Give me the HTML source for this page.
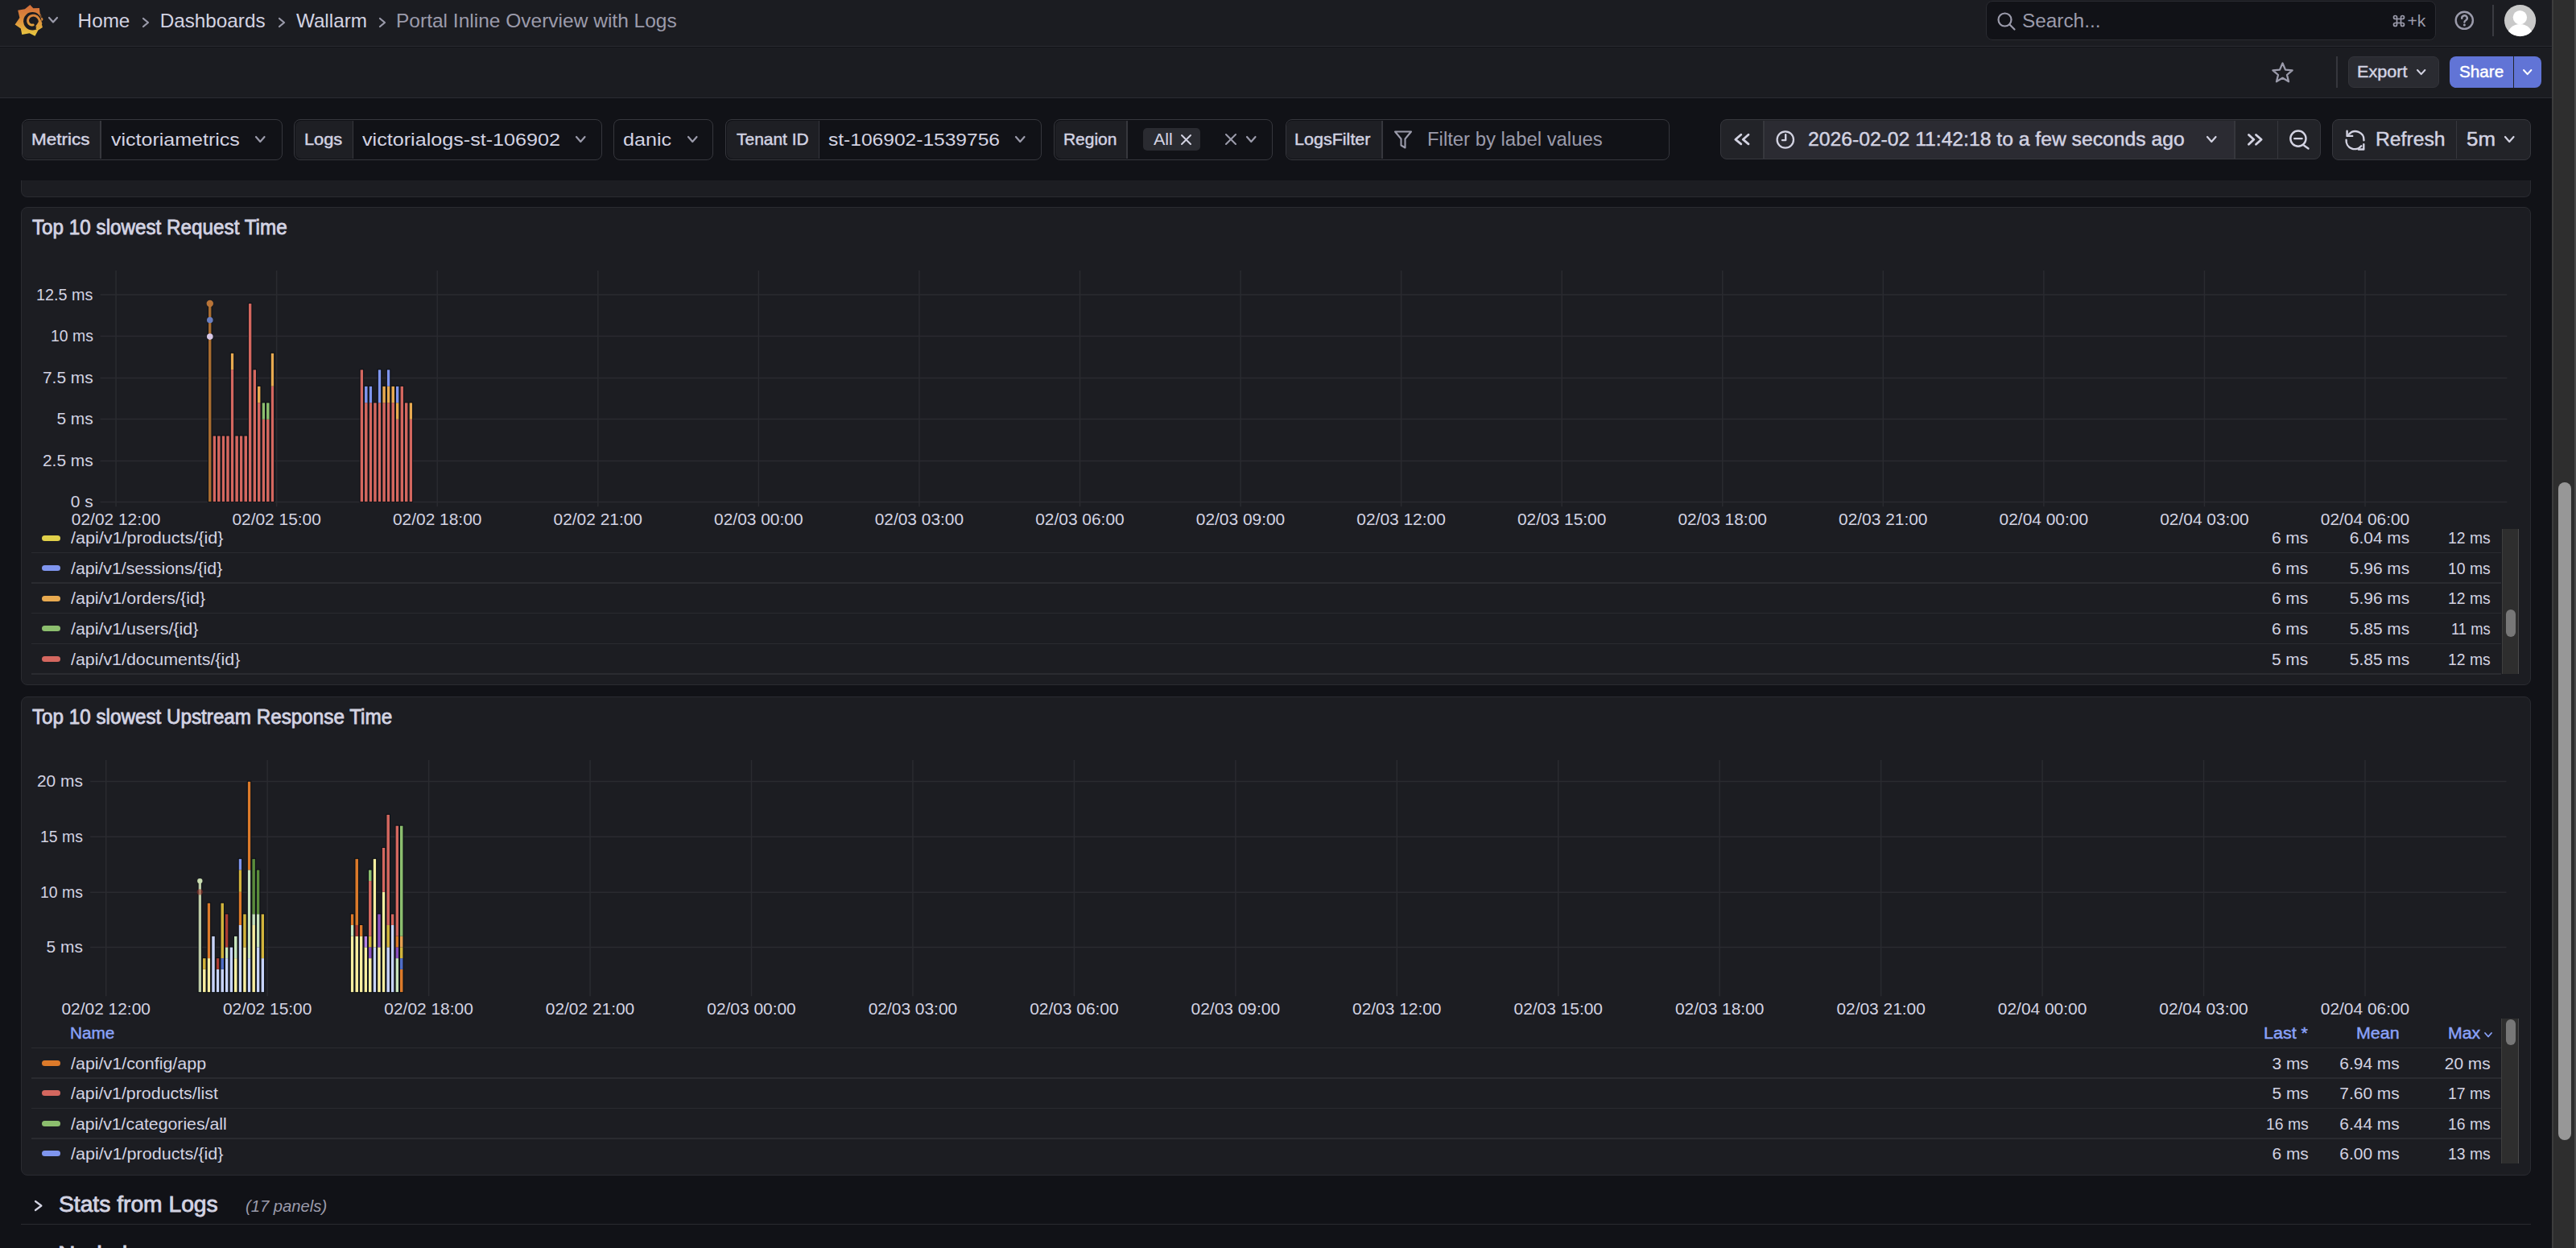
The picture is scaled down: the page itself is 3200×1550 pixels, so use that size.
<!DOCTYPE html>
<html><head><meta charset="utf-8"><title>Portal Inline Overview with Logs</title>
<style>
html,body{margin:0;padding:0;}
body{width:3200px;height:1550px;overflow:hidden;position:relative;background:#111217;font-family:"Liberation Sans",sans-serif;}
.t{position:absolute;white-space:nowrap;line-height:1;transform-origin:0 0;}
.r{position:absolute;box-sizing:border-box;}
svg.r{overflow:visible;}
</style></head><body>
<div class="r" style="left:0.00px;top:0.00px;width:3170.00px;height:57.00px;background:#1b1c21;"></div>
<div class="r" style="left:0.00px;top:57.00px;width:3170.00px;height:1.20px;background:#2b2c32;"></div>
<div class="r" style="left:0.00px;top:58.50px;width:3170.00px;height:62.50px;background:#1b1c21;"></div>
<div class="r" style="left:0.00px;top:120.80px;width:3170.00px;height:1.20px;background:#2b2c32;"></div>
<svg class="r" style="left:15.00px;top:3.00px;width:42.00px;height:45.00px;" viewBox="15 3 42 45" fill="none"><defs><linearGradient id="lg" gradientUnits="userSpaceOnUse" x1="0" y1="8" x2="0" y2="44"><stop offset="0" stop-color="#d4703a"/><stop offset="0.45" stop-color="#dc8c3c"/><stop offset="1" stop-color="#e8c840"/></linearGradient></defs><polygon fill="url(#lg)" points="37.35,6.06 41.30,10.20 48.90,10.00 49.60,16.20 53.60,23.90 51.20,27.50 52.90,34.00 47.40,37.60 43.50,44.80 36.60,41.20 27.30,43.00 25.80,35.40 18.60,30.40 24.40,22.10 22.20,12.70 30.90,11.30"/><circle cx="40.3" cy="26.3" r="11.2" fill="#1b1c21"/><polyline fill="none" stroke="url(#lg)" stroke-width="2.9" stroke-linecap="round" points="41.20,30.93 40.75,31.01 40.30,31.06 39.84,31.08 39.38,31.05 38.91,30.98 38.45,30.86 37.99,30.70 37.55,30.50 37.12,30.25 36.71,29.96 36.33,29.63 35.97,29.25 35.65,28.84 35.37,28.39 35.12,27.91 34.92,27.41 34.77,26.87 34.67,26.32 34.63,25.75 34.63,25.17 34.70,24.59 34.83,24.01 35.01,23.44 35.25,22.87 35.55,22.33 35.91,21.81 36.32,21.32 36.78,20.87 37.30,20.46 37.86,20.10 38.46,19.79 39.09,19.54 39.76,19.35 40.45,19.22 41.16,19.16 41.88,19.17 42.61,19.25 43.34,19.41 44.05,19.64 44.75,19.94 45.43,20.32 46.07,20.77 46.68,21.28 47.24,21.86 47.74,22.50 48.19,23.19 48.57,23.93 48.88,24.72 49.11,25.55 49.26,26.40 49.33,27.28 49.31,28.16 49.20,29.06 49.01,29.95 48.72,30.82 48.34,31.68 47.88,32.50 47.33,33.28 46.70,34.02 45.99,34.69"/><path d="M49.5 33.5 L52.5 29 L50 24 L44 33 Z" fill="url(#lg)"/><path d="M48.6 16.8 L53.2 22.2 L51.6 22.2 Z" fill="#1b1c21"/></svg>
<svg class="r" style="left:59.00px;top:20.25px;width:14.00px;height:9.50px;" viewBox="0 0 14.00 9.50" fill="none"><polyline points="2,2 7.00,7.50 12.00,2" stroke="#9b9bab" stroke-width="2.20" stroke-linecap="round" stroke-linejoin="round"/></svg>
<div class="t" style="left:96.61px;top:14.00px;font-size:24.27px;color:#d3d3e2;">Home</div>
<svg class="r" style="left:175.50px;top:21.00px;width:10.00px;height:14.00px;" viewBox="0 0 10.00 14.00" fill="none"><polyline points="2,2 8.00,7.00 2,12.00" stroke="#9b9bab" stroke-width="2.20" stroke-linecap="round" stroke-linejoin="round"/></svg>
<div class="t" style="left:198.71px;top:14.00px;font-size:24.27px;color:#d3d3e2;">Dashboards</div>
<svg class="r" style="left:344.50px;top:21.00px;width:10.00px;height:14.00px;" viewBox="0 0 10.00 14.00" fill="none"><polyline points="2,2 8.00,7.00 2,12.00" stroke="#9b9bab" stroke-width="2.20" stroke-linecap="round" stroke-linejoin="round"/></svg>
<div class="t" style="left:367.89px;top:14.00px;font-size:24.27px;color:#d3d3e2;">Wallarm</div>
<svg class="r" style="left:469.50px;top:21.00px;width:10.00px;height:14.00px;" viewBox="0 0 10.00 14.00" fill="none"><polyline points="2,2 8.00,7.00 2,12.00" stroke="#9b9bab" stroke-width="2.20" stroke-linecap="round" stroke-linejoin="round"/></svg>
<div class="t" style="left:491.79px;top:14.00px;font-size:24.27px;color:#9b9bab;transform:scaleX(1.0101);">Portal Inline Overview with Logs</div>
<div class="r" style="left:2467.40px;top:0.90px;width:559.00px;height:49.40px;background:#111217;border:1.5px solid #2a2b31;border-radius:8.0px;"></div>
<svg class="r" style="left:2480.00px;top:14.00px;width:25.00px;height:24.00px;" viewBox="0 0 25.00 24.00" fill="none"><circle cx="10.5" cy="10.5" r="8" stroke="#9b9bab" stroke-width="2.2"/><line x1="16.5" y1="16.5" x2="22.5" y2="22.5" stroke="#9b9bab" stroke-width="2.2" stroke-linecap="round"/></svg>
<div class="t" style="left:2512.29px;top:14.00px;font-size:23.98px;color:#9b9bab;transform:scaleX(1.0156);">Search...</div>
<svg class="r" style="left:2972.00px;top:18.00px;width:16.00px;height:16.00px;" viewBox="0 0 16.00 16.00" fill="none"><path d="M5.5 5.5 H10.5 V10.5 H5.5 Z M5.5 5.5 V3.5 A2 2 0 1 0 3.5 5.5 H5.5 M10.5 5.5 V3.5 A2 2 0 1 1 12.5 5.5 H10.5 M5.5 10.5 V12.5 A2 2 0 1 1 3.5 10.5 H5.5 M10.5 10.5 V12.5 A2 2 0 1 0 12.5 10.5 H10.5" stroke="#9b9bab" stroke-width="1.7" fill="none"/></svg>
<div class="t" style="left:2990.47px;top:15.00px;font-size:21.08px;color:#9b9bab;">+k</div>
<svg class="r" style="left:3047.00px;top:11.00px;width:28.00px;height:28.00px;" viewBox="0 0 28.00 28.00" fill="none"><circle cx="14.3" cy="14.3" r="10.6" stroke="#9b9bab" stroke-width="2.4"/><path d="M11.2 11.8 A3.3 3.1 0 1 1 16.4 14 C15 14.8 14.4 15.4 14.4 16.6" stroke="#9b9bab" stroke-width="2.4" stroke-linecap="round" fill="none"/><circle cx="14.4" cy="20" r="1.5" fill="#9b9bab"/></svg>
<div class="r" style="left:3096.20px;top:6.20px;width:2.00px;height:38.80px;background:#3a3b41;"></div>
<svg class="r" style="left:3111.20px;top:5.60px;width:39.20px;height:39.20px;" viewBox="0 0 39.20 39.20" fill="none"><defs><clipPath id="avc"><circle cx="19.6" cy="19.6" r="19.5"/></clipPath></defs><circle cx="19.6" cy="19.6" r="19.6" fill="#c9c9c9"/><g clip-path="url(#avc)"><circle cx="19.4" cy="15.6" r="8.7" fill="#fff"/><ellipse cx="19.4" cy="38" rx="15.5" ry="14" fill="#fff"/></g></svg>
<svg class="r" style="left:2821.00px;top:76.00px;width:29.00px;height:27.00px;" viewBox="0 0 29.00 27.00" fill="none"><path d="M14.5 2.5 L18 10.6 L26.6 11.3 L20 17 L22 25.3 L14.5 20.8 L7 25.3 L9 17 L2.4 11.3 L11 10.6 Z" stroke="#9b9bab" stroke-width="2.3" stroke-linejoin="round"/></svg>
<div class="r" style="left:2902.00px;top:70.20px;width:1.50px;height:38.40px;background:#36373d;"></div>
<div class="r" style="left:2917.20px;top:70.20px;width:112.40px;height:38.40px;background:#2a2b31;border:1px solid #33343a;border-radius:7.0px;"></div>
<div class="t" style="left:2927.63px;top:79.00px;font-size:20.35px;color:#d3d3e2;transform:scaleX(1.0619);-webkit-text-stroke:0.45px #d3d3e2;">Export</div>
<svg class="r" style="left:3000.50px;top:84.60px;width:13.40px;height:9.20px;" viewBox="0 0 13.40 9.20" fill="none"><polyline points="2,2 6.70,7.20 11.40,2" stroke="#d3d3e2" stroke-width="2.00" stroke-linecap="round" stroke-linejoin="round"/></svg>
<div class="r" style="left:3043.00px;top:70.20px;width:113.90px;height:38.40px;background:#6174d6;border-radius:8.0px;"></div>
<div class="r" style="left:3121.70px;top:70.20px;width:1.50px;height:38.40px;background:#22252b;"></div>
<div class="t" style="left:3054.66px;top:79.00px;font-size:20.35px;color:#ffffff;transform:scaleX(1.0178);-webkit-text-stroke:0.45px #ffffff;">Share</div>
<svg class="r" style="left:3133.20px;top:84.60px;width:13.40px;height:9.20px;" viewBox="0 0 13.40 9.20" fill="none"><polyline points="2,2 6.70,7.20 11.40,2" stroke="#ffffff" stroke-width="2.00" stroke-linecap="round" stroke-linejoin="round"/></svg>
<div class="r" style="left:26.90px;top:148.30px;width:324.10px;height:50.30px;background:#111217;border:1.5px solid #36373d;border-radius:8.0px;"></div>
<div class="r" style="left:28.40px;top:149.80px;width:95.90px;height:47.30px;background:#1e1f24;border-radius:7px 0 0 7px;"></div>
<div class="r" style="left:124.30px;top:149.80px;width:1.50px;height:47.30px;background:#36373d;"></div>
<div class="t" style="left:39.46px;top:163.00px;font-size:20.49px;color:#d3d3e2;transform:scaleX(1.0974);-webkit-text-stroke:0.45px #d3d3e2;">Metrics</div>
<div class="t" style="left:138.31px;top:163.00px;font-size:22.54px;color:#d3d3e2;transform:scaleX(1.1100);">victoriametrics</div>
<svg class="r" style="left:316.35px;top:168.00px;width:14.50px;height:10.00px;" viewBox="0 0 14.50 10.00" fill="none"><polyline points="2,2 7.25,8.00 12.50,2" stroke="#9b9bab" stroke-width="2.20" stroke-linecap="round" stroke-linejoin="round"/></svg>
<div class="r" style="left:365.00px;top:148.30px;width:383.40px;height:50.30px;background:#111217;border:1.5px solid #36373d;border-radius:8.0px;"></div>
<div class="r" style="left:366.50px;top:149.80px;width:71.00px;height:47.30px;background:#1e1f24;border-radius:7px 0 0 7px;"></div>
<div class="r" style="left:437.50px;top:149.80px;width:1.50px;height:47.30px;background:#36373d;"></div>
<div class="t" style="left:377.51px;top:163.00px;font-size:20.49px;color:#d3d3e2;transform:scaleX(1.0640);-webkit-text-stroke:0.45px #d3d3e2;">Logs</div>
<div class="t" style="left:450.21px;top:163.00px;font-size:22.54px;color:#d3d3e2;transform:scaleX(1.1159);">victorialogs-st-106902</div>
<svg class="r" style="left:714.35px;top:168.00px;width:14.50px;height:10.00px;" viewBox="0 0 14.50 10.00" fill="none"><polyline points="2,2 7.25,8.00 12.50,2" stroke="#9b9bab" stroke-width="2.20" stroke-linecap="round" stroke-linejoin="round"/></svg>
<div class="r" style="left:762.00px;top:148.30px;width:123.50px;height:50.30px;background:#111217;border:1.5px solid #36373d;border-radius:8.0px;"></div>
<div class="t" style="left:774.15px;top:163.00px;font-size:22.54px;color:#d3d3e2;transform:scaleX(1.1141);">danic</div>
<svg class="r" style="left:852.65px;top:168.00px;width:14.50px;height:10.00px;" viewBox="0 0 14.50 10.00" fill="none"><polyline points="2,2 7.25,8.00 12.50,2" stroke="#9b9bab" stroke-width="2.20" stroke-linecap="round" stroke-linejoin="round"/></svg>
<div class="r" style="left:901.10px;top:148.30px;width:392.60px;height:50.30px;background:#111217;border:1.5px solid #36373d;border-radius:8.0px;"></div>
<div class="r" style="left:902.60px;top:149.80px;width:114.00px;height:47.30px;background:#1e1f24;border-radius:7px 0 0 7px;"></div>
<div class="r" style="left:1016.60px;top:149.80px;width:1.50px;height:47.30px;background:#36373d;"></div>
<div class="t" style="left:914.53px;top:163.00px;font-size:20.49px;color:#d3d3e2;transform:scaleX(1.0232);-webkit-text-stroke:0.45px #d3d3e2;">Tenant ID</div>
<div class="t" style="left:1029.32px;top:163.00px;font-size:22.54px;color:#d3d3e2;transform:scaleX(1.0898);">st-106902-1539756</div>
<svg class="r" style="left:1260.35px;top:168.00px;width:14.50px;height:10.00px;" viewBox="0 0 14.50 10.00" fill="none"><polyline points="2,2 7.25,8.00 12.50,2" stroke="#9b9bab" stroke-width="2.20" stroke-linecap="round" stroke-linejoin="round"/></svg>
<div class="r" style="left:1309.20px;top:148.30px;width:272.00px;height:50.30px;background:#111217;border:1.5px solid #36373d;border-radius:8.0px;"></div>
<div class="r" style="left:1310.70px;top:149.80px;width:88.60px;height:47.30px;background:#1e1f24;border-radius:7px 0 0 7px;"></div>
<div class="r" style="left:1399.30px;top:149.80px;width:1.50px;height:47.30px;background:#36373d;"></div>
<div class="t" style="left:1321.48px;top:163.00px;font-size:20.49px;color:#d3d3e2;transform:scaleX(1.0222);-webkit-text-stroke:0.45px #d3d3e2;">Region</div>
<div class="r" style="left:1420.40px;top:158.90px;width:70.20px;height:28.60px;background:#2a2b31;border-radius:5.0px;"></div>
<div class="t" style="left:1432.76px;top:163.00px;font-size:20.49px;color:#d3d3e2;transform:scaleX(1.0487);">All</div>
<svg class="r" style="left:1466.00px;top:165.50px;width:15.00px;height:15.00px;" viewBox="0 0 15.00 15.00" fill="none"><path d="M2 2 L13.00 13.00 M13.00 2 L2 13.00" stroke="#d3d3e2" stroke-width="2.00" stroke-linecap="round"/></svg>
<svg class="r" style="left:1521.00px;top:165.00px;width:16.00px;height:16.00px;" viewBox="0 0 16.00 16.00" fill="none"><path d="M2 2 L14.00 14.00 M14.00 2 L2 14.00" stroke="#9b9bab" stroke-width="2.00" stroke-linecap="round"/></svg>
<svg class="r" style="left:1547.25px;top:168.00px;width:14.50px;height:10.00px;" viewBox="0 0 14.50 10.00" fill="none"><polyline points="2,2 7.25,8.00 12.50,2" stroke="#9b9bab" stroke-width="2.20" stroke-linecap="round" stroke-linejoin="round"/></svg>
<div class="r" style="left:1596.60px;top:148.30px;width:477.80px;height:50.30px;background:#111217;border:1.5px solid #36373d;border-radius:8.0px;"></div>
<div class="r" style="left:1598.10px;top:149.80px;width:118.10px;height:47.30px;background:#1e1f24;border-radius:7px 0 0 7px;"></div>
<div class="r" style="left:1716.20px;top:149.80px;width:1.50px;height:47.30px;background:#36373d;"></div>
<div class="t" style="left:1608.43px;top:163.00px;font-size:20.49px;color:#d3d3e2;transform:scaleX(1.0506);-webkit-text-stroke:0.45px #d3d3e2;">LogsFilter</div>
<svg class="r" style="left:1730.00px;top:160.00px;width:27.00px;height:26.00px;" viewBox="0 0 27.00 26.00" fill="none"><path d="M3 3.5 H23 L15.5 12.5 V23.5 L10.5 20.5 V12.5 Z" stroke="#9b9bab" stroke-width="2.1" stroke-linejoin="round"/></svg>
<div class="t" style="left:1772.84px;top:161.00px;font-size:24.56px;color:#9b9bab;transform:scaleX(0.9728);">Filter by label values</div>
<div class="r" style="left:2137.10px;top:148.30px;width:746.30px;height:50.00px;background:#222328;border:1.5px solid #36373d;border-radius:8.0px;"></div>
<div class="r" style="left:2190.50px;top:149.80px;width:584.80px;height:47.00px;background:#2b2b32;"></div>
<div class="r" style="left:2190.00px;top:149.80px;width:1.50px;height:47.00px;background:#36373d;"></div>
<div class="r" style="left:2775.30px;top:149.80px;width:1.50px;height:47.00px;background:#36373d;"></div>
<div class="r" style="left:2828.70px;top:149.80px;width:1.50px;height:47.00px;background:#36373d;"></div>
<svg class="r" style="left:2150.00px;top:162.00px;width:28.00px;height:22.00px;" viewBox="0 0 28.00 22.00" fill="none"><polyline points="12.8,5.2 5.8,11.2 12.8,16.8" stroke="#d3d3e2" stroke-width="2.8" stroke-linecap="round" stroke-linejoin="round"/><polyline points="22.0,5.2 15.2,11.2 22.0,16.8" stroke="#d3d3e2" stroke-width="2.8" stroke-linecap="round" stroke-linejoin="round"/></svg>
<svg class="r" style="left:2204.40px;top:158.70px;width:27.60px;height:27.60px;" viewBox="0 0 27.60 27.60" fill="none"><circle cx="13.8" cy="14.5" r="10.2" stroke="#d3d3e2" stroke-width="2.3"/><polyline points="14.2,8.3 14.2,15.1 10,15.1" stroke="#d3d3e2" stroke-width="2.4" stroke-linecap="round" stroke-linejoin="round"/></svg>
<div class="t" style="left:2245.56px;top:161.00px;font-size:24.21px;color:#d3d3e2;transform:scaleX(1.0201);-webkit-text-stroke:0.45px #d3d3e2;">2026-02-02 11:42:18 to a few seconds ago</div>
<svg class="r" style="left:2740.05px;top:167.50px;width:14.50px;height:10.00px;" viewBox="0 0 14.50 10.00" fill="none"><polyline points="2,2 7.25,8.00 12.50,2" stroke="#d3d3e2" stroke-width="2.20" stroke-linecap="round" stroke-linejoin="round"/></svg>
<svg class="r" style="left:2788.00px;top:162.00px;width:26.00px;height:22.00px;" viewBox="0 0 26.00 22.00" fill="none"><polyline points="5.5,5.5 11.8,11.2 5.5,17.2" stroke="#d3d3e2" stroke-width="2.8" stroke-linecap="round" stroke-linejoin="round"/><polyline points="14.5,5.5 21.2,11.2 14.5,17.2" stroke="#d3d3e2" stroke-width="2.8" stroke-linecap="round" stroke-linejoin="round"/></svg>
<svg class="r" style="left:2842.00px;top:158.00px;width:28.00px;height:30.00px;" viewBox="0 0 28.00 30.00" fill="none"><circle cx="12.9" cy="14.1" r="9.6" stroke="#d3d3e2" stroke-width="2.4"/><line x1="8.2" y1="14.1" x2="17.6" y2="14.1" stroke="#d3d3e2" stroke-width="2.4" stroke-linecap="round"/><line x1="20.2" y1="22.7" x2="25.5" y2="26.5" stroke="#d3d3e2" stroke-width="2.4" stroke-linecap="round"/></svg>
<div class="r" style="left:2897.00px;top:148.40px;width:246.80px;height:50.40px;background:#222328;border:1.5px solid #36373d;border-radius:8.0px;"></div>
<div class="r" style="left:3050.50px;top:149.90px;width:1.50px;height:47.40px;background:#36373d;"></div>
<svg class="r" style="left:2910.50px;top:159.50px;width:28.00px;height:28.00px;" viewBox="0 0 28.00 28.00" fill="none"><path d="M6.9 6.8 A10.6 10.6 0 0 1 25.5 14.2" stroke="#d3d3e2" stroke-width="2.4" stroke-linecap="round" fill="none"/><polyline points="4.6,2.6 4.6,8.9 11.2,8.9" stroke="#d3d3e2" stroke-width="2.4" stroke-linecap="round" stroke-linejoin="round"/><path d="M3.6 13.6 A10.6 10.6 0 0 0 22.3 21.3" stroke="#d3d3e2" stroke-width="2.4" stroke-linecap="round" fill="none"/><polyline points="25.3,19.2 25.3,25.5 18.8,25.5" stroke="#d3d3e2" stroke-width="2.4" stroke-linecap="round" stroke-linejoin="round"/></svg>
<div class="t" style="left:2950.77px;top:161.00px;font-size:24.56px;color:#d3d3e2;transform:scaleX(1.0066);-webkit-text-stroke:0.45px #d3d3e2;">Refresh</div>
<div class="t" style="left:3063.56px;top:161.00px;font-size:24.21px;color:#d3d3e2;transform:scaleX(1.0688);-webkit-text-stroke:0.45px #d3d3e2;">5m</div>
<svg class="r" style="left:3110.15px;top:167.50px;width:14.50px;height:10.00px;" viewBox="0 0 14.50 10.00" fill="none"><polyline points="2,2 7.25,8.00 12.50,2" stroke="#d3d3e2" stroke-width="2.20" stroke-linecap="round" stroke-linejoin="round"/></svg>
<div class="r" style="left:26.10px;top:223.50px;width:3117.60px;height:21.20px;background:#1c1d22;border:1.5px solid #2a2b31;border-radius:0 0 8px 8px;border-top:none;"></div>
<div class="r" style="left:3170.00px;top:0.00px;width:30.00px;height:1550.00px;background:#2e2e2e;"></div>
<div class="r" style="left:3170.00px;top:0.00px;width:2.00px;height:1550.00px;background:#3c3c3c;"></div>
<div class="r" style="left:3198.00px;top:0.00px;width:2.00px;height:1550.00px;background:#4a4a4a;"></div>
<div class="r" style="left:3178.00px;top:598.90px;width:16.00px;height:817.20px;background:#979797;border-radius:8.0px;"></div>
<div class="r" style="left:26.10px;top:257.00px;width:3117.60px;height:594.40px;background:#1c1d22;border:1.5px solid #2a2b31;border-radius:8.0px;"></div>
<div class="t" style="left:39.96px;top:271.00px;font-size:24.85px;color:#d3d3e2;transform:scaleX(0.9757);-webkit-text-stroke:0.80px #d3d3e2;">Top 10 slowest Request Time</div>
<div class="r" style="left:26.10px;top:865.00px;width:3117.60px;height:594.60px;background:#1c1d22;border:1.5px solid #2a2b31;border-radius:8.0px;"></div>
<div class="t" style="left:39.96px;top:879.00px;font-size:24.85px;color:#d3d3e2;transform:scaleX(0.9753);-webkit-text-stroke:0.80px #d3d3e2;">Top 10 slowest Upstream Response Time</div>
<svg class="r" style="left:0;top:0;width:3170px;height:1550px" viewBox="0 0 3170 1550"><line x1="124.60" y1="366.10" x2="3114.40" y2="366.10" stroke="#2a2b30" stroke-width="1.5"/><line x1="124.60" y1="417.50" x2="3114.40" y2="417.50" stroke="#2a2b30" stroke-width="1.5"/><line x1="124.60" y1="469.40" x2="3114.40" y2="469.40" stroke="#2a2b30" stroke-width="1.5"/><line x1="124.60" y1="520.50" x2="3114.40" y2="520.50" stroke="#2a2b30" stroke-width="1.5"/><line x1="124.60" y1="572.40" x2="3114.40" y2="572.40" stroke="#2a2b30" stroke-width="1.5"/><line x1="124.60" y1="623.40" x2="3114.40" y2="623.40" stroke="#2a2b30" stroke-width="1.5"/><line x1="144.10" y1="335.90" x2="144.10" y2="629.20" stroke="#2a2b30" stroke-width="1.5"/><line x1="343.66" y1="335.90" x2="343.66" y2="629.20" stroke="#2a2b30" stroke-width="1.5"/><line x1="543.23" y1="335.90" x2="543.23" y2="629.20" stroke="#2a2b30" stroke-width="1.5"/><line x1="742.79" y1="335.90" x2="742.79" y2="629.20" stroke="#2a2b30" stroke-width="1.5"/><line x1="942.36" y1="335.90" x2="942.36" y2="629.20" stroke="#2a2b30" stroke-width="1.5"/><line x1="1141.92" y1="335.90" x2="1141.92" y2="629.20" stroke="#2a2b30" stroke-width="1.5"/><line x1="1341.49" y1="335.90" x2="1341.49" y2="629.20" stroke="#2a2b30" stroke-width="1.5"/><line x1="1541.05" y1="335.90" x2="1541.05" y2="629.20" stroke="#2a2b30" stroke-width="1.5"/><line x1="1740.61" y1="335.90" x2="1740.61" y2="629.20" stroke="#2a2b30" stroke-width="1.5"/><line x1="1940.18" y1="335.90" x2="1940.18" y2="629.20" stroke="#2a2b30" stroke-width="1.5"/><line x1="2139.74" y1="335.90" x2="2139.74" y2="629.20" stroke="#2a2b30" stroke-width="1.5"/><line x1="2339.31" y1="335.90" x2="2339.31" y2="629.20" stroke="#2a2b30" stroke-width="1.5"/><line x1="2538.87" y1="335.90" x2="2538.87" y2="629.20" stroke="#2a2b30" stroke-width="1.5"/><line x1="2738.44" y1="335.90" x2="2738.44" y2="629.20" stroke="#2a2b30" stroke-width="1.5"/><line x1="2938.00" y1="335.90" x2="2938.00" y2="629.20" stroke="#2a2b30" stroke-width="1.5"/></svg>
<div class="t" style="left:45.37px;top:356.00px;font-size:20.93px;color:#d3d3e2;transform:scaleX(0.9452);">12.5 ms</div>
<div class="t" style="left:62.85px;top:407.00px;font-size:20.93px;color:#d3d3e2;transform:scaleX(0.9274);">10 ms</div>
<div class="t" style="left:52.94px;top:459.00px;font-size:20.93px;color:#d3d3e2;">7.5 ms</div>
<div class="t" style="left:70.40px;top:510.00px;font-size:20.93px;color:#d3d3e2;">5 ms</div>
<div class="t" style="left:52.94px;top:562.00px;font-size:20.93px;color:#d3d3e2;">2.5 ms</div>
<div class="t" style="left:87.84px;top:613.00px;font-size:20.93px;color:#d3d3e2;">0 s</div>
<div class="t" style="left:88.85px;top:635.00px;font-size:20.92px;color:#d3d3e2;">02/02 12:00</div>
<div class="t" style="left:288.41px;top:635.00px;font-size:20.92px;color:#d3d3e2;">02/02 15:00</div>
<div class="t" style="left:487.98px;top:635.00px;font-size:20.92px;color:#d3d3e2;">02/02 18:00</div>
<div class="t" style="left:687.54px;top:635.00px;font-size:20.92px;color:#d3d3e2;">02/02 21:00</div>
<div class="t" style="left:887.11px;top:635.00px;font-size:20.92px;color:#d3d3e2;">02/03 00:00</div>
<div class="t" style="left:1086.67px;top:635.00px;font-size:20.92px;color:#d3d3e2;">02/03 03:00</div>
<div class="t" style="left:1286.24px;top:635.00px;font-size:20.92px;color:#d3d3e2;">02/03 06:00</div>
<div class="t" style="left:1485.80px;top:635.00px;font-size:20.92px;color:#d3d3e2;">02/03 09:00</div>
<div class="t" style="left:1685.36px;top:635.00px;font-size:20.92px;color:#d3d3e2;">02/03 12:00</div>
<div class="t" style="left:1884.93px;top:635.00px;font-size:20.92px;color:#d3d3e2;">02/03 15:00</div>
<div class="t" style="left:2084.49px;top:635.00px;font-size:20.92px;color:#d3d3e2;">02/03 18:00</div>
<div class="t" style="left:2284.06px;top:635.00px;font-size:20.92px;color:#d3d3e2;">02/03 21:00</div>
<div class="t" style="left:2483.62px;top:635.00px;font-size:20.92px;color:#d3d3e2;">02/04 00:00</div>
<div class="t" style="left:2683.19px;top:635.00px;font-size:20.92px;color:#d3d3e2;">02/04 03:00</div>
<div class="t" style="left:2882.75px;top:635.00px;font-size:20.92px;color:#d3d3e2;">02/04 06:00</div>
<svg class="r" style="left:0;top:0;width:3170px;height:1550px" viewBox="0 0 3170 1550"><line x1="112.10" y1="970.50" x2="3113.50" y2="970.50" stroke="#2a2b30" stroke-width="1.5"/><line x1="112.10" y1="1039.20" x2="3113.50" y2="1039.20" stroke="#2a2b30" stroke-width="1.5"/><line x1="112.10" y1="1108.30" x2="3113.50" y2="1108.30" stroke="#2a2b30" stroke-width="1.5"/><line x1="112.10" y1="1176.40" x2="3113.50" y2="1176.40" stroke="#2a2b30" stroke-width="1.5"/><line x1="131.70" y1="944.10" x2="131.70" y2="1237.30" stroke="#2a2b30" stroke-width="1.5"/><line x1="332.15" y1="944.10" x2="332.15" y2="1237.30" stroke="#2a2b30" stroke-width="1.5"/><line x1="532.60" y1="944.10" x2="532.60" y2="1237.30" stroke="#2a2b30" stroke-width="1.5"/><line x1="733.05" y1="944.10" x2="733.05" y2="1237.30" stroke="#2a2b30" stroke-width="1.5"/><line x1="933.50" y1="944.10" x2="933.50" y2="1237.30" stroke="#2a2b30" stroke-width="1.5"/><line x1="1133.95" y1="944.10" x2="1133.95" y2="1237.30" stroke="#2a2b30" stroke-width="1.5"/><line x1="1334.40" y1="944.10" x2="1334.40" y2="1237.30" stroke="#2a2b30" stroke-width="1.5"/><line x1="1534.85" y1="944.10" x2="1534.85" y2="1237.30" stroke="#2a2b30" stroke-width="1.5"/><line x1="1735.30" y1="944.10" x2="1735.30" y2="1237.30" stroke="#2a2b30" stroke-width="1.5"/><line x1="1935.75" y1="944.10" x2="1935.75" y2="1237.30" stroke="#2a2b30" stroke-width="1.5"/><line x1="2136.20" y1="944.10" x2="2136.20" y2="1237.30" stroke="#2a2b30" stroke-width="1.5"/><line x1="2336.65" y1="944.10" x2="2336.65" y2="1237.30" stroke="#2a2b30" stroke-width="1.5"/><line x1="2537.10" y1="944.10" x2="2537.10" y2="1237.30" stroke="#2a2b30" stroke-width="1.5"/><line x1="2737.55" y1="944.10" x2="2737.55" y2="1237.30" stroke="#2a2b30" stroke-width="1.5"/><line x1="2938.00" y1="944.10" x2="2938.00" y2="1237.30" stroke="#2a2b30" stroke-width="1.5"/></svg>
<div class="t" style="left:45.96px;top:960.00px;font-size:20.93px;color:#d3d3e2;">20 ms</div>
<div class="t" style="left:50.05px;top:1029.00px;font-size:20.93px;color:#d3d3e2;transform:scaleX(0.9274);">15 ms</div>
<div class="t" style="left:50.05px;top:1098.00px;font-size:20.93px;color:#d3d3e2;transform:scaleX(0.9274);">10 ms</div>
<div class="t" style="left:57.60px;top:1166.00px;font-size:20.93px;color:#d3d3e2;">5 ms</div>
<div class="t" style="left:76.45px;top:1243.00px;font-size:20.92px;color:#d3d3e2;">02/02 12:00</div>
<div class="t" style="left:276.90px;top:1243.00px;font-size:20.92px;color:#d3d3e2;">02/02 15:00</div>
<div class="t" style="left:477.35px;top:1243.00px;font-size:20.92px;color:#d3d3e2;">02/02 18:00</div>
<div class="t" style="left:677.80px;top:1243.00px;font-size:20.92px;color:#d3d3e2;">02/02 21:00</div>
<div class="t" style="left:878.25px;top:1243.00px;font-size:20.92px;color:#d3d3e2;">02/03 00:00</div>
<div class="t" style="left:1078.70px;top:1243.00px;font-size:20.92px;color:#d3d3e2;">02/03 03:00</div>
<div class="t" style="left:1279.15px;top:1243.00px;font-size:20.92px;color:#d3d3e2;">02/03 06:00</div>
<div class="t" style="left:1479.60px;top:1243.00px;font-size:20.92px;color:#d3d3e2;">02/03 09:00</div>
<div class="t" style="left:1680.05px;top:1243.00px;font-size:20.92px;color:#d3d3e2;">02/03 12:00</div>
<div class="t" style="left:1880.50px;top:1243.00px;font-size:20.92px;color:#d3d3e2;">02/03 15:00</div>
<div class="t" style="left:2080.95px;top:1243.00px;font-size:20.92px;color:#d3d3e2;">02/03 18:00</div>
<div class="t" style="left:2281.40px;top:1243.00px;font-size:20.92px;color:#d3d3e2;">02/03 21:00</div>
<div class="t" style="left:2481.85px;top:1243.00px;font-size:20.92px;color:#d3d3e2;">02/04 00:00</div>
<div class="t" style="left:2682.30px;top:1243.00px;font-size:20.92px;color:#d3d3e2;">02/04 03:00</div>
<div class="t" style="left:2882.75px;top:1243.00px;font-size:20.92px;color:#d3d3e2;">02/04 06:00</div>
<svg class="r" style="left:0;top:0;width:3170px;height:1550px" viewBox="0 0 3170 1550"><rect x="258.95" y="377.04" width="3.70" height="246.36" fill="#a86c30"/><rect x="258.50" y="376.59" width="4.60" height="246.81" fill="none" stroke="#0c1015" stroke-width="0.9"/><rect x="264.50" y="541.28" width="3.70" height="82.12" fill="#d4675f"/><rect x="264.05" y="540.83" width="4.60" height="82.57" fill="none" stroke="#0c1015" stroke-width="0.9"/><rect x="270.04" y="541.28" width="3.70" height="82.12" fill="#d4675f"/><rect x="269.59" y="540.83" width="4.60" height="82.57" fill="none" stroke="#0c1015" stroke-width="0.9"/><rect x="275.58" y="541.28" width="3.70" height="82.12" fill="#d4675f"/><rect x="275.13" y="540.83" width="4.60" height="82.57" fill="none" stroke="#0c1015" stroke-width="0.9"/><rect x="281.13" y="541.28" width="3.70" height="82.12" fill="#d4675f"/><rect x="280.68" y="540.83" width="4.60" height="82.57" fill="none" stroke="#0c1015" stroke-width="0.9"/><rect x="286.68" y="459.16" width="3.70" height="164.24" fill="#d4675f"/><rect x="286.68" y="438.63" width="3.70" height="20.53" fill="#e8aa50"/><rect x="286.23" y="438.18" width="4.60" height="185.22" fill="none" stroke="#0c1015" stroke-width="0.9"/><rect x="292.22" y="541.28" width="3.70" height="82.12" fill="#d4675f"/><rect x="291.77" y="540.83" width="4.60" height="82.57" fill="none" stroke="#0c1015" stroke-width="0.9"/><rect x="297.76" y="541.28" width="3.70" height="82.12" fill="#d4675f"/><rect x="297.31" y="540.83" width="4.60" height="82.57" fill="none" stroke="#0c1015" stroke-width="0.9"/><rect x="303.31" y="541.28" width="3.70" height="82.12" fill="#d4675f"/><rect x="302.86" y="540.83" width="4.60" height="82.57" fill="none" stroke="#0c1015" stroke-width="0.9"/><rect x="308.86" y="377.04" width="3.70" height="246.36" fill="#d4675f"/><rect x="308.41" y="376.59" width="4.60" height="246.81" fill="none" stroke="#0c1015" stroke-width="0.9"/><rect x="314.40" y="459.16" width="3.70" height="164.24" fill="#d4675f"/><rect x="313.95" y="458.71" width="4.60" height="164.69" fill="none" stroke="#0c1015" stroke-width="0.9"/><rect x="319.94" y="500.22" width="3.70" height="123.18" fill="#d4675f"/><rect x="319.94" y="479.69" width="3.70" height="20.53" fill="#e8aa50"/><rect x="319.50" y="479.24" width="4.60" height="144.16" fill="none" stroke="#0c1015" stroke-width="0.9"/><rect x="325.49" y="520.75" width="3.70" height="102.65" fill="#d4675f"/><rect x="325.49" y="500.22" width="3.70" height="20.53" fill="#8cbe6e"/><rect x="325.04" y="499.77" width="4.60" height="123.63" fill="none" stroke="#0c1015" stroke-width="0.9"/><rect x="331.03" y="520.75" width="3.70" height="102.65" fill="#d4675f"/><rect x="331.03" y="500.22" width="3.70" height="20.53" fill="#8cbe6e"/><rect x="330.58" y="499.77" width="4.60" height="123.63" fill="none" stroke="#0c1015" stroke-width="0.9"/><rect x="336.58" y="479.69" width="3.70" height="143.71" fill="#d4675f"/><rect x="336.58" y="438.63" width="3.70" height="41.06" fill="#e8aa50"/><rect x="336.13" y="438.18" width="4.60" height="185.22" fill="none" stroke="#0c1015" stroke-width="0.9"/><rect x="447.48" y="459.16" width="3.70" height="164.24" fill="#d4675f"/><rect x="447.03" y="458.71" width="4.60" height="164.69" fill="none" stroke="#0c1015" stroke-width="0.9"/><rect x="453.02" y="500.22" width="3.70" height="123.18" fill="#d4675f"/><rect x="453.02" y="479.69" width="3.70" height="20.53" fill="#7f95ee"/><rect x="452.57" y="479.24" width="4.60" height="144.16" fill="none" stroke="#0c1015" stroke-width="0.9"/><rect x="458.57" y="500.22" width="3.70" height="123.18" fill="#d4675f"/><rect x="458.57" y="479.69" width="3.70" height="20.53" fill="#7f95ee"/><rect x="458.12" y="479.24" width="4.60" height="144.16" fill="none" stroke="#0c1015" stroke-width="0.9"/><rect x="464.12" y="500.22" width="3.70" height="123.18" fill="#d4675f"/><rect x="463.67" y="499.77" width="4.60" height="123.63" fill="none" stroke="#0c1015" stroke-width="0.9"/><rect x="469.66" y="500.22" width="3.70" height="123.18" fill="#d4675f"/><rect x="469.66" y="459.16" width="3.70" height="41.06" fill="#7f95ee"/><rect x="469.21" y="458.71" width="4.60" height="164.69" fill="none" stroke="#0c1015" stroke-width="0.9"/><rect x="475.20" y="500.22" width="3.70" height="123.18" fill="#d4675f"/><rect x="475.20" y="479.69" width="3.70" height="20.53" fill="#e8aa50"/><rect x="474.75" y="479.24" width="4.60" height="144.16" fill="none" stroke="#0c1015" stroke-width="0.9"/><rect x="480.75" y="500.22" width="3.70" height="123.18" fill="#d4675f"/><rect x="480.75" y="479.69" width="3.70" height="20.53" fill="#e8aa50"/><rect x="480.75" y="459.16" width="3.70" height="20.53" fill="#7f95ee"/><rect x="480.30" y="458.71" width="4.60" height="164.69" fill="none" stroke="#0c1015" stroke-width="0.9"/><rect x="486.29" y="500.22" width="3.70" height="123.18" fill="#d4675f"/><rect x="486.29" y="479.69" width="3.70" height="20.53" fill="#e8aa50"/><rect x="485.84" y="479.24" width="4.60" height="144.16" fill="none" stroke="#0c1015" stroke-width="0.9"/><rect x="491.84" y="520.75" width="3.70" height="102.65" fill="#d4675f"/><rect x="491.84" y="500.22" width="3.70" height="20.53" fill="#e8aa50"/><rect x="491.84" y="479.69" width="3.70" height="20.53" fill="#7f95ee"/><rect x="491.39" y="479.24" width="4.60" height="144.16" fill="none" stroke="#0c1015" stroke-width="0.9"/><rect x="497.38" y="479.69" width="3.70" height="143.71" fill="#d4675f"/><rect x="496.94" y="479.24" width="4.60" height="144.16" fill="none" stroke="#0c1015" stroke-width="0.9"/><rect x="502.93" y="500.22" width="3.70" height="123.18" fill="#d4675f"/><rect x="502.48" y="499.77" width="4.60" height="123.63" fill="none" stroke="#0c1015" stroke-width="0.9"/><rect x="508.48" y="520.75" width="3.70" height="102.65" fill="#d4675f"/><rect x="508.48" y="500.22" width="3.70" height="20.53" fill="#e8aa50"/><rect x="508.03" y="499.77" width="4.60" height="123.63" fill="none" stroke="#0c1015" stroke-width="0.9"/><circle cx="260.8" cy="377.04" r="4.2" fill="#b87438"/><circle cx="260.8" cy="397.57" r="3.8" fill="#6a7fc0"/><circle cx="260.8" cy="418.10" r="3.8" fill="#d8c8e8"/></svg>
<svg class="r" style="left:0;top:0;width:3170px;height:1550px" viewBox="0 0 3170 1550"><rect x="246.45" y="1094.08" width="3.70" height="138.57" fill="#bccaa6"/><rect x="246.00" y="1093.63" width="4.60" height="139.02" fill="none" stroke="#0c1015" stroke-width="0.9"/><rect x="252.02" y="1203.84" width="3.70" height="28.81" fill="#f8eea0"/><rect x="252.02" y="1190.12" width="3.70" height="13.72" fill="#d2b43c"/><rect x="251.57" y="1189.67" width="4.60" height="42.98" fill="none" stroke="#0c1015" stroke-width="0.9"/><rect x="257.58" y="1190.12" width="3.70" height="42.53" fill="#f8eea0"/><rect x="257.58" y="1121.52" width="3.70" height="68.60" fill="#dc7a2a"/><rect x="257.13" y="1121.07" width="4.60" height="111.58" fill="none" stroke="#0c1015" stroke-width="0.9"/><rect x="263.15" y="1162.68" width="3.70" height="69.97" fill="#c8d4fa"/><rect x="262.70" y="1162.23" width="4.60" height="70.42" fill="none" stroke="#0c1015" stroke-width="0.9"/><rect x="268.72" y="1203.84" width="3.70" height="28.81" fill="#c8d4fa"/><rect x="268.72" y="1190.12" width="3.70" height="13.72" fill="#aa3c32"/><rect x="268.27" y="1189.67" width="4.60" height="42.98" fill="none" stroke="#0c1015" stroke-width="0.9"/><rect x="274.28" y="1203.84" width="3.70" height="28.81" fill="#c8d4fa"/><rect x="274.28" y="1190.12" width="3.70" height="13.72" fill="#506ec8"/><rect x="274.28" y="1121.52" width="3.70" height="68.60" fill="#d2b43c"/><rect x="273.83" y="1121.07" width="4.60" height="111.58" fill="none" stroke="#0c1015" stroke-width="0.9"/><rect x="279.85" y="1190.12" width="3.70" height="42.53" fill="#c8d4fa"/><rect x="279.85" y="1176.40" width="3.70" height="13.72" fill="#c8e4bc"/><rect x="279.85" y="1135.24" width="3.70" height="41.16" fill="#aa3c32"/><rect x="279.40" y="1134.79" width="4.60" height="97.86" fill="none" stroke="#0c1015" stroke-width="0.9"/><rect x="285.42" y="1176.40" width="3.70" height="56.25" fill="#c8d4fa"/><rect x="284.97" y="1175.95" width="4.60" height="56.70" fill="none" stroke="#0c1015" stroke-width="0.9"/><rect x="290.99" y="1190.12" width="3.70" height="42.53" fill="#f8eea0"/><rect x="290.99" y="1162.68" width="3.70" height="27.44" fill="#c8e4bc"/><rect x="290.54" y="1162.23" width="4.60" height="70.42" fill="none" stroke="#0c1015" stroke-width="0.9"/><rect x="296.55" y="1148.96" width="3.70" height="83.69" fill="#c8d4fa"/><rect x="296.55" y="1107.80" width="3.70" height="41.16" fill="#dc7a2a"/><rect x="296.55" y="1080.36" width="3.70" height="27.44" fill="#d2b43c"/><rect x="296.55" y="1066.64" width="3.70" height="13.72" fill="#7f95ee"/><rect x="296.10" y="1066.19" width="4.60" height="166.46" fill="none" stroke="#0c1015" stroke-width="0.9"/><rect x="302.12" y="1176.40" width="3.70" height="56.25" fill="#f8eea0"/><rect x="302.12" y="1135.24" width="3.70" height="41.16" fill="#d2b43c"/><rect x="301.67" y="1134.79" width="4.60" height="97.86" fill="none" stroke="#0c1015" stroke-width="0.9"/><rect x="307.69" y="1190.12" width="3.70" height="42.53" fill="#c8d4fa"/><rect x="307.69" y="1080.36" width="3.70" height="109.76" fill="#c8e4bc"/><rect x="307.69" y="970.60" width="3.70" height="109.76" fill="#dc7a2a"/><rect x="307.24" y="970.15" width="4.60" height="262.50" fill="none" stroke="#0c1015" stroke-width="0.9"/><rect x="313.25" y="1148.96" width="3.70" height="83.69" fill="#f8eea0"/><rect x="313.25" y="1135.24" width="3.70" height="13.72" fill="#c8e4bc"/><rect x="313.25" y="1066.64" width="3.70" height="68.60" fill="#5a8c3c"/><rect x="312.80" y="1066.19" width="4.60" height="166.46" fill="none" stroke="#0c1015" stroke-width="0.9"/><rect x="318.82" y="1176.40" width="3.70" height="56.25" fill="#c8d4fa"/><rect x="318.82" y="1135.24" width="3.70" height="41.16" fill="#c8e4bc"/><rect x="318.82" y="1080.36" width="3.70" height="54.88" fill="#5a8c3c"/><rect x="318.37" y="1079.91" width="4.60" height="152.74" fill="none" stroke="#0c1015" stroke-width="0.9"/><rect x="324.39" y="1190.12" width="3.70" height="42.53" fill="#c8d4fa"/><rect x="324.39" y="1135.24" width="3.70" height="54.88" fill="#d2b43c"/><rect x="323.94" y="1134.79" width="4.60" height="97.86" fill="none" stroke="#0c1015" stroke-width="0.9"/><rect x="435.73" y="1162.68" width="3.70" height="69.97" fill="#f8eea0"/><rect x="435.73" y="1148.96" width="3.70" height="13.72" fill="#c8e4bc"/><rect x="435.73" y="1135.24" width="3.70" height="13.72" fill="#dc7a2a"/><rect x="435.28" y="1134.79" width="4.60" height="97.86" fill="none" stroke="#0c1015" stroke-width="0.9"/><rect x="441.29" y="1162.68" width="3.70" height="69.97" fill="#f8eea0"/><rect x="441.29" y="1148.96" width="3.70" height="13.72" fill="#aa3c32"/><rect x="441.29" y="1066.64" width="3.70" height="82.32" fill="#dc7a2a"/><rect x="440.84" y="1066.19" width="4.60" height="166.46" fill="none" stroke="#0c1015" stroke-width="0.9"/><rect x="446.86" y="1162.68" width="3.70" height="69.97" fill="#f8eea0"/><rect x="446.86" y="1148.96" width="3.70" height="13.72" fill="#dc7a2a"/><rect x="446.41" y="1148.51" width="4.60" height="84.14" fill="none" stroke="#0c1015" stroke-width="0.9"/><rect x="452.43" y="1176.40" width="3.70" height="56.25" fill="#f8eea0"/><rect x="452.43" y="1162.68" width="3.70" height="13.72" fill="#b482e6"/><rect x="451.98" y="1162.23" width="4.60" height="70.42" fill="none" stroke="#0c1015" stroke-width="0.9"/><rect x="458.00" y="1190.12" width="3.70" height="42.53" fill="#f8eea0"/><rect x="458.00" y="1176.40" width="3.70" height="13.72" fill="#8c50be"/><rect x="458.00" y="1162.68" width="3.70" height="13.72" fill="#d2b43c"/><rect x="458.00" y="1094.08" width="3.70" height="68.60" fill="#d4675f"/><rect x="458.00" y="1080.36" width="3.70" height="13.72" fill="#8cbe6e"/><rect x="457.55" y="1079.91" width="4.60" height="152.74" fill="none" stroke="#0c1015" stroke-width="0.9"/><rect x="463.56" y="1176.40" width="3.70" height="56.25" fill="#c8d4fa"/><rect x="463.56" y="1066.64" width="3.70" height="109.76" fill="#f8eea0"/><rect x="463.11" y="1066.19" width="4.60" height="166.46" fill="none" stroke="#0c1015" stroke-width="0.9"/><rect x="469.13" y="1176.40" width="3.70" height="56.25" fill="#f8eea0"/><rect x="469.13" y="1135.24" width="3.70" height="41.16" fill="#8c50be"/><rect x="468.68" y="1134.79" width="4.60" height="97.86" fill="none" stroke="#0c1015" stroke-width="0.9"/><rect x="474.70" y="1107.80" width="3.70" height="124.85" fill="#f8eea0"/><rect x="474.70" y="1052.92" width="3.70" height="54.88" fill="#d4675f"/><rect x="474.25" y="1052.47" width="4.60" height="180.18" fill="none" stroke="#0c1015" stroke-width="0.9"/><rect x="480.26" y="1176.40" width="3.70" height="56.25" fill="#c8d4fa"/><rect x="480.26" y="1148.96" width="3.70" height="27.44" fill="#d2b43c"/><rect x="480.26" y="1011.76" width="3.70" height="137.20" fill="#d4675f"/><rect x="479.81" y="1011.31" width="4.60" height="221.34" fill="none" stroke="#0c1015" stroke-width="0.9"/><rect x="485.83" y="1148.96" width="3.70" height="83.69" fill="#c8d4fa"/><rect x="485.83" y="1135.24" width="3.70" height="13.72" fill="#d4675f"/><rect x="485.38" y="1134.79" width="4.60" height="97.86" fill="none" stroke="#0c1015" stroke-width="0.9"/><rect x="491.40" y="1190.12" width="3.70" height="42.53" fill="#c8e4bc"/><rect x="491.40" y="1176.40" width="3.70" height="13.72" fill="#8c50be"/><rect x="491.40" y="1162.68" width="3.70" height="13.72" fill="#dc7a2a"/><rect x="491.40" y="1025.48" width="3.70" height="137.20" fill="#d4675f"/><rect x="490.95" y="1025.03" width="4.60" height="207.62" fill="none" stroke="#0c1015" stroke-width="0.9"/><rect x="496.97" y="1203.84" width="3.70" height="28.81" fill="#dc7a2a"/><rect x="496.97" y="1190.12" width="3.70" height="13.72" fill="#506ec8"/><rect x="496.97" y="1176.40" width="3.70" height="13.72" fill="#d2b43c"/><rect x="496.97" y="1162.68" width="3.70" height="13.72" fill="#e6a050"/><rect x="496.97" y="1025.48" width="3.70" height="137.20" fill="#8cbe6e"/><rect x="496.52" y="1025.03" width="4.60" height="207.62" fill="none" stroke="#0c1015" stroke-width="0.9"/><circle cx="248.3" cy="1094.08" r="3.2" fill="#c8dcb0"/><circle cx="248.3" cy="1107.80" r="3.6" fill="rgba(150,50,40,0.55)"/></svg>
<div class="r" style="left:39.00px;top:685.55px;width:3068.00px;height:1.50px;background:#2a2b30;"></div>
<div class="r" style="left:39.00px;top:723.45px;width:3068.00px;height:1.50px;background:#2a2b30;"></div>
<div class="r" style="left:39.00px;top:760.65px;width:3068.00px;height:1.50px;background:#2a2b30;"></div>
<div class="r" style="left:39.00px;top:798.55px;width:3068.00px;height:1.50px;background:#2a2b30;"></div>
<div class="r" style="left:39.00px;top:836.35px;width:3068.00px;height:1.50px;background:#2a2b30;"></div>
<div class="r" style="left:52.00px;top:664.60px;width:23.00px;height:7.00px;background:#e0d04a;border-radius:4.0px;"></div>
<div class="t" style="left:88.10px;top:658.00px;font-size:20.93px;color:#d3d3e2;transform:scaleX(1.0310);">/api/v1/products/{id}</div>
<div class="t" style="left:2821.93px;top:658.00px;font-size:20.92px;color:#d3d3e2;">6 ms</div>
<div class="t" style="left:2918.85px;top:658.00px;font-size:20.92px;color:#d3d3e2;">6.04 ms</div>
<div class="t" style="left:3040.89px;top:658.00px;font-size:20.92px;color:#d3d3e2;transform:scaleX(0.9277);">12 ms</div>
<div class="r" style="left:52.00px;top:702.20px;width:23.00px;height:7.00px;background:#7f95ee;border-radius:4.0px;"></div>
<div class="t" style="left:88.10px;top:696.00px;font-size:20.93px;color:#d3d3e2;transform:scaleX(1.0181);">/api/v1/sessions/{id}</div>
<div class="t" style="left:2821.93px;top:696.00px;font-size:20.92px;color:#d3d3e2;">6 ms</div>
<div class="t" style="left:2918.85px;top:696.00px;font-size:20.92px;color:#d3d3e2;">5.96 ms</div>
<div class="t" style="left:3040.89px;top:696.00px;font-size:20.92px;color:#d3d3e2;transform:scaleX(0.9277);">10 ms</div>
<div class="r" style="left:52.00px;top:739.60px;width:23.00px;height:7.00px;background:#e8aa50;border-radius:4.0px;"></div>
<div class="t" style="left:88.10px;top:733.00px;font-size:20.93px;color:#d3d3e2;transform:scaleX(1.0261);">/api/v1/orders/{id}</div>
<div class="t" style="left:2821.93px;top:733.00px;font-size:20.92px;color:#d3d3e2;">6 ms</div>
<div class="t" style="left:2918.85px;top:733.00px;font-size:20.92px;color:#d3d3e2;">5.96 ms</div>
<div class="t" style="left:3040.89px;top:733.00px;font-size:20.92px;color:#d3d3e2;transform:scaleX(0.9277);">12 ms</div>
<div class="r" style="left:52.00px;top:777.10px;width:23.00px;height:7.00px;background:#8cbe6e;border-radius:4.0px;"></div>
<div class="t" style="left:88.10px;top:771.00px;font-size:20.93px;color:#d3d3e2;transform:scaleX(1.0233);">/api/v1/users/{id}</div>
<div class="t" style="left:2821.93px;top:771.00px;font-size:20.92px;color:#d3d3e2;">6 ms</div>
<div class="t" style="left:2918.85px;top:771.00px;font-size:20.92px;color:#d3d3e2;">5.85 ms</div>
<div class="t" style="left:3044.94px;top:771.00px;font-size:20.92px;color:#d3d3e2;transform:scaleX(0.8788);">11 ms</div>
<div class="r" style="left:52.00px;top:814.70px;width:23.00px;height:7.00px;background:#d4675f;border-radius:4.0px;"></div>
<div class="t" style="left:88.10px;top:809.00px;font-size:20.93px;color:#d3d3e2;transform:scaleX(1.0214);">/api/v1/documents/{id}</div>
<div class="t" style="left:2821.93px;top:809.00px;font-size:20.92px;color:#d3d3e2;">5 ms</div>
<div class="t" style="left:2918.85px;top:809.00px;font-size:20.92px;color:#d3d3e2;">5.85 ms</div>
<div class="t" style="left:3040.89px;top:809.00px;font-size:20.92px;color:#d3d3e2;transform:scaleX(0.9277);">12 ms</div>
<div class="r" style="left:3107.60px;top:657.00px;width:21.40px;height:179.60px;background:#2e2e2e;border-left:1.5px solid #3e3e3e;border-right:1.5px solid #4a4a4a;box-sizing:border-box;"></div>
<div class="r" style="left:3113.00px;top:756.50px;width:12.00px;height:34.90px;background:#777777;border-radius:6.0px;"></div>
<div class="t" style="left:86.90px;top:1273.00px;font-size:20.35px;color:#8aa2f8;transform:scaleX(1.0192);-webkit-text-stroke:0.45px #8aa2f8;">Name</div>
<div class="t" style="left:2811.54px;top:1273.00px;font-size:20.35px;color:#8aa2f8;transform:scaleX(1.0571);-webkit-text-stroke:0.45px #8aa2f8;">Last *</div>
<div class="t" style="left:2927.44px;top:1273.00px;font-size:20.35px;color:#8aa2f8;transform:scaleX(1.0522);-webkit-text-stroke:0.45px #8aa2f8;">Mean</div>
<div class="t" style="left:3040.76px;top:1273.00px;font-size:20.35px;color:#8aa2f8;transform:scaleX(1.0425);-webkit-text-stroke:0.45px #8aa2f8;">Max</div>
<svg class="r" style="left:3084.70px;top:1280.75px;width:12.00px;height:8.50px;" viewBox="0 0 12.00 8.50" fill="none"><polyline points="2,2 6.00,6.50 10.00,2" stroke="#8aa2f8" stroke-width="1.80" stroke-linecap="round" stroke-linejoin="round"/></svg>
<div class="r" style="left:39.00px;top:1300.65px;width:3068.00px;height:1.50px;background:#2a2b30;"></div>
<div class="r" style="left:39.00px;top:1338.45px;width:3068.00px;height:1.50px;background:#2a2b30;"></div>
<div class="r" style="left:39.00px;top:1375.85px;width:3068.00px;height:1.50px;background:#2a2b30;"></div>
<div class="r" style="left:39.00px;top:1413.45px;width:3068.00px;height:1.50px;background:#2a2b30;"></div>
<div class="r" style="left:52.00px;top:1316.80px;width:23.00px;height:7.00px;background:#dc7a2a;border-radius:4.0px;"></div>
<div class="t" style="left:88.10px;top:1311.00px;font-size:20.93px;color:#d3d3e2;transform:scaleX(1.0249);">/api/v1/config/app</div>
<div class="t" style="left:2822.53px;top:1311.00px;font-size:20.92px;color:#d3d3e2;">3 ms</div>
<div class="t" style="left:2906.35px;top:1311.00px;font-size:20.92px;color:#d3d3e2;">6.94 ms</div>
<div class="t" style="left:3036.80px;top:1311.00px;font-size:20.92px;color:#d3d3e2;">20 ms</div>
<div class="r" style="left:52.00px;top:1354.30px;width:23.00px;height:7.00px;background:#d4675f;border-radius:4.0px;"></div>
<div class="t" style="left:88.10px;top:1348.00px;font-size:20.93px;color:#d3d3e2;transform:scaleX(1.0210);">/api/v1/products/list</div>
<div class="t" style="left:2822.53px;top:1348.00px;font-size:20.92px;color:#d3d3e2;">5 ms</div>
<div class="t" style="left:2906.35px;top:1348.00px;font-size:20.92px;color:#d3d3e2;">7.60 ms</div>
<div class="t" style="left:3040.89px;top:1348.00px;font-size:20.92px;color:#d3d3e2;transform:scaleX(0.9277);">17 ms</div>
<div class="r" style="left:52.00px;top:1391.90px;width:23.00px;height:7.00px;background:#8cbe6e;border-radius:4.0px;"></div>
<div class="t" style="left:88.10px;top:1386.00px;font-size:20.93px;color:#d3d3e2;transform:scaleX(1.0156);">/api/v1/categories/all</div>
<div class="t" style="left:2814.99px;top:1386.00px;font-size:20.92px;color:#d3d3e2;transform:scaleX(0.9277);">16 ms</div>
<div class="t" style="left:2906.35px;top:1386.00px;font-size:20.92px;color:#d3d3e2;">6.44 ms</div>
<div class="t" style="left:3040.89px;top:1386.00px;font-size:20.92px;color:#d3d3e2;transform:scaleX(0.9277);">16 ms</div>
<div class="r" style="left:52.00px;top:1429.40px;width:23.00px;height:7.00px;background:#7f95ee;border-radius:4.0px;"></div>
<div class="t" style="left:88.10px;top:1423.00px;font-size:20.93px;color:#d3d3e2;transform:scaleX(1.0310);">/api/v1/products/{id}</div>
<div class="t" style="left:2822.53px;top:1423.00px;font-size:20.92px;color:#d3d3e2;">6 ms</div>
<div class="t" style="left:2906.35px;top:1423.00px;font-size:20.92px;color:#d3d3e2;">6.00 ms</div>
<div class="t" style="left:3040.89px;top:1423.00px;font-size:20.92px;color:#d3d3e2;transform:scaleX(0.9277);">13 ms</div>
<div class="r" style="left:3107.10px;top:1265.20px;width:21.60px;height:179.80px;background:#2e2e2e;border-left:1.5px solid #3e3e3e;border-right:1.5px solid #4a4a4a;box-sizing:border-box;"></div>
<div class="r" style="left:3113.30px;top:1265.60px;width:11.50px;height:32.10px;background:#777777;border-radius:6.0px;"></div>
<svg class="r" style="left:42.30px;top:1489.70px;width:11.40px;height:15.00px;" viewBox="0 0 11.40 15.00" fill="none"><polyline points="2,2 9.40,7.50 2,13.00" stroke="#d3d3e2" stroke-width="2.20" stroke-linecap="round" stroke-linejoin="round"/></svg>
<div class="t" style="left:72.82px;top:1483.00px;font-size:27.03px;color:#d3d3e2;transform:scaleX(1.0447);-webkit-text-stroke:0.80px #d3d3e2;">Stats from Logs</div>
<div class="t" style="left:305.35px;top:1488.00px;font-size:20.93px;color:#9b9bab;transform:scaleX(0.9664);font-style:italic;">(17 panels)</div>
<div class="r" style="left:25.60px;top:1519.50px;width:3118.10px;height:1.50px;background:#2a2b30;"></div>
<div class="t" style="left:71.65px;top:1545.00px;font-size:27.03px;color:#d3d3e2;transform:scaleX(1.1048);-webkit-text-stroke:0.80px #d3d3e2;">Node logs</div>
<div class="t" style="left:238.96px;top:1550.00px;font-size:20.93px;color:#9b9bab;transform:scaleX(1.0570);font-style:italic;">(5 panels)</div>
</body></html>
